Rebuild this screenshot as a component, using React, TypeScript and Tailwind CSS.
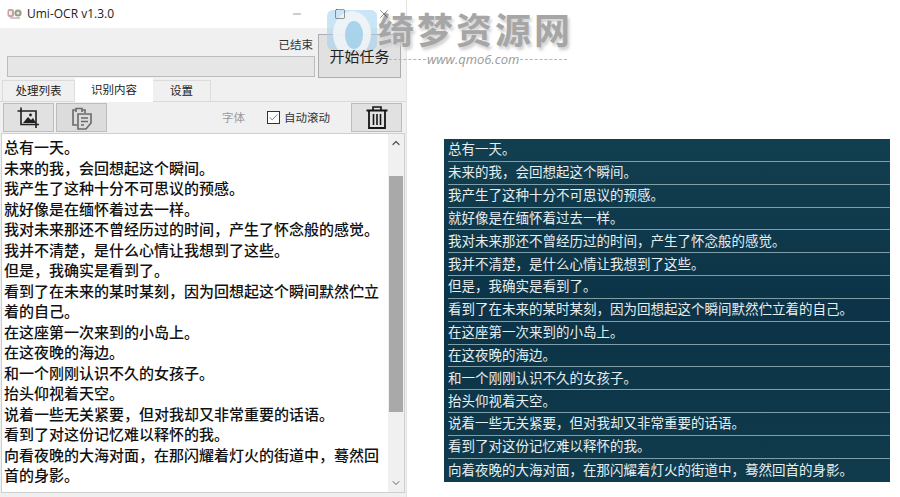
import React from 'react';
import { Minus, Square, X, ChevronUp, ChevronDown, Check } from 'lucide-react';

const cjk = "font-['Noto_Sans_CJK_SC','Noto_Sans',sans-serif]";

const LEFT_LINES = [
    '总有一天。',
    '未来的我，会回想起这个瞬间。',
    '我产生了这种十分不可思议的预感。',
    '就好像是在缅怀着过去一样。',
    '我对未来那还不曾经历过的时间，产生了怀念般的感觉。',
    '我并不清楚，是什么心情让我想到了这些。',
    '但是，我确实是看到了。',
    '看到了在未来的某时某刻，因为回想起这个瞬间默然伫立着的自己。',
    '在这座第一次来到的小岛上。',
    '在这夜晚的海边。',
    '和一个刚刚认识不久的女孩子。',
    '抬头仰视着天空。',
    '说着一些无关紧要，但对我却又非常重要的话语。',
    '看到了对这份记忆难以释怀的我。',
    '向看夜晚的大海对面，在那闪耀着灯火的街道中，蓦然回首的身影。',
];

const RIGHT_LINES = [
    ...LEFT_LINES.slice(0, 14),
    '向着夜晚的大海对面，在那闪耀着灯火的街道中，蓦然回首的身影。',
];

function AppIcon() {
    return (
        <svg width="16" height="14" viewBox="0 0 16 14" aria-hidden="true">
            <rect x="0.5" y="2" width="6.5" height="8" rx="2" fill="#c9a3a3" />
            <rect x="2" y="4" width="3" height="4" fill="#f3eeee" />
            <circle cx="11" cy="6" r="3.6" fill="#9a9a8c" />
            <circle cx="11" cy="6" r="1.6" fill="#e6e6e0" />
            <path d="M3 11h10" stroke="#b9b2b2" strokeWidth="1.4" />
        </svg>
    );
}

function ImageCropIcon() {
    return (
        <svg width="23" height="22" viewBox="0 0 23 22" fill="none" stroke="#202020" aria-hidden="true">
            <path d="M4 0.5V17.5H22" strokeWidth="1.6" />
            <path d="M0.5 4H19V21" strokeWidth="1.6" />
            <circle cx="13.5" cy="8" r="1.4" fill="#202020" stroke="none" />
            <path d="M6 16l5-6 3 3 2-2 3 5z" fill="#202020" stroke="none" />
        </svg>
    );
}

function ClipboardIcon() {
    return (
        <svg width="22" height="24" viewBox="0 0 22 24" fill="none" stroke="#6a6a6a" strokeWidth="1.6" aria-hidden="true">
            <path d="M5 4H2v15h4" />
            <path d="M5 6V2.5h6V6" />
            <path d="M11 4h3v3" />
            <path d="M7 8h13v9l-5 6H7z" />
            <path d="M10 12h7M10 15.5h7M10 19h3" />
        </svg>
    );
}

function BinIcon() {
    return (
        <svg width="22" height="23" viewBox="0 0 22 23" fill="none" stroke="#151515" aria-hidden="true">
            <path d="M0.5 4.5H21.5" strokeWidth="2" />
            <path d="M7 4V1h8v3" strokeWidth="1.6" />
            <path d="M3 5V22H19V5" strokeWidth="1.8" />
            <path d="M7.5 8V19M11 8V19M14.5 8V19" strokeWidth="1.6" />
        </svg>
    );
}

function OcrWindow() {
    return (
        <div className="flex h-[497px] w-[407px] shrink-0 flex-col border-r border-[#e4e4e4] bg-[#f0f0f0]">
            {/* Title bar */}
            <div className="flex h-[28px] shrink-0 items-center bg-white pl-[7px]">
                <AppIcon />
                <span className="ml-[4px] font-['Open_Sans',sans-serif] text-[12px] text-[#222]">
                    Umi-OCR v1.3.0
                </span>
                {/* window buttons stay above the site stamp */}
                <div className="relative z-10 ml-auto flex items-center gap-[31px] pr-[15px] text-[#333]">
                    <Minus size={12} strokeWidth={1} />
                    <Square size={12} strokeWidth={1} />
                    <X size={14} strokeWidth={1} />
                </div>
            </div>

            {/* Status and progress */}
            <div className="flex h-[50px] shrink-0 items-end pl-[7px] pr-[5px]">
                <div className="flex w-[308px] flex-col items-end">
                    <span className={`${cjk} mb-[4px] mr-[2px] text-[11.5px] leading-[16px] text-[#333]`}>已结束</span>
                    <div className="mb-[1px] h-[21px] w-full border border-[#bcbcbc] bg-[#e6e6e6]" />
                </div>
                <button className={`${cjk} ml-[3px] flex h-[44px] w-[83px] items-center justify-center border border-[#adadad] bg-[#e1e1e1] text-[15px] text-[#222]`}>
                    开始任务
                </button>
            </div>

            {/* Tabs */}
            <div className={`${cjk} mt-[1px] flex h-[23px] shrink-0 items-end border-b border-[#d9d9d9] pl-[2px] text-[11.5px] text-[#222]`}>
                <div className="flex h-[21px] w-[73px] items-center justify-center border border-b-0 border-[#dcdcdc] bg-[#f0f0f0]">处理列表</div>
                <div className="-mb-[1px] flex h-[24px] w-[78px] items-center justify-center bg-white">识别内容</div>
                <div className="flex h-[21px] w-[58px] items-center justify-center border border-b-0 border-l-0 border-[#dcdcdc] bg-[#f0f0f0]">设置</div>
            </div>

            {/* Toolbar */}
            <div className="flex h-[31px] shrink-0 items-center pl-[3px] pr-[4px]">
                <div className="flex h-[29px] w-[51px] items-center justify-center border border-[#bdbdbd] bg-[#e1e1e1]">
                    <ImageCropIcon />
                </div>
                <div className="ml-[2px] flex h-[29px] w-[51px] items-center justify-center border border-[#bdbdbd] bg-[#dcdcdc]">
                    <ClipboardIcon />
                </div>
                <span className={`${cjk} ml-[115px] text-[11.5px] text-[#9a9a9a]`}>字体</span>
                <span className="ml-[22px] flex h-[13px] w-[13px] items-center justify-center border border-[#333] bg-white">
                    <Check size={11} strokeWidth={1.4} className="text-[#333]" />
                </span>
                <span className={`${cjk} ml-[4px] text-[11.5px] text-[#333]`}>自动滚动</span>
                <div className="ml-auto flex h-[29px] w-[51px] items-center justify-center border border-[#bdbdbd] bg-[#e1e1e1]">
                    <BinIcon />
                </div>
            </div>

            {/* Recognised text with scrollbar */}
            <div className="mx-[1px] flex h-[360px] shrink-0 border border-[#cfcfcf] bg-white">
                <div className={`${cjk} flex-1 pl-[2px] pr-[9px] pt-[3px] text-[15px] leading-[20.5px] font-medium text-[#111]`}>
                    {LEFT_LINES.map(line => (
                        <div key={line}>{line}</div>
                    ))}
                </div>
                <div className="flex w-[16px] shrink-0 flex-col items-center bg-[#f0f0f0]">
                    <ChevronUp size={12} strokeWidth={2.5} className="mt-[3px] text-[#555]" />
                    <div className="mt-[27px] h-[236px] w-[14px] bg-[#a9a9a9]" />
                    <ChevronDown size={12} strokeWidth={2} className="mb-[3px] mt-auto text-[#666]" />
                </div>
            </div>
        </div>
    );
}

function OverlayPanel() {
    return (
        <div className={`${cjk} ml-[37px] mt-[139px] h-[343px] w-[446px] shrink-0 bg-gradient-to-b from-[#123f50] via-[#0c3347] to-[#0f3b4c] text-[13.5px] text-[#e6eef0]`}>
            {RIGHT_LINES.map((line, i) => (
                <div
                    key={line}
                    className={`ml-[4px] flex h-[22.85px] items-center pb-[3px] ${i < RIGHT_LINES.length - 1 ? 'border-b border-[#7f9ea8]' : ''}`}>
                    {line}
                </div>
            ))}
        </div>
    );
}

// Site stamp sitting across the top of the page
function SiteStamp() {
    return (
        <div className="pointer-events-none absolute left-[327px] top-[10px] h-[60px] w-[250px]">
            <svg className="absolute left-0 top-0" width="50" height="40" viewBox="0 0 50 40" aria-hidden="true">
                <rect x="0" y="0" width="50" height="40" rx="6" fill="#9fd0ee" opacity="0.55" />
                <ellipse cx="25" cy="24" rx="19" ry="23" fill="#f4f6f8" opacity="0.85" />
                <ellipse cx="27" cy="25" rx="9" ry="14" fill="#a9d3ea" />
            </svg>
            <span className={`${cjk} absolute left-[51px] top-[-2px] text-[36px] leading-[40px] font-bold tracking-[3px] whitespace-nowrap text-[#a6a6a6] [text-shadow:2px_3px_3px_#d0d0d0]`}>
                绮梦资源网
            </span>
            <div className="absolute left-[62px] top-[42px] flex w-[178px] items-center text-[#9a9a9a]">
                <span className="h-0 w-[37px] flex-none border-t border-dashed border-[#b5b5b5]" />
                <span className="mx-[1px] font-['Open_Sans',sans-serif] text-[13px] leading-[14px] italic">www.qmo6.com</span>
                <span className="h-0 flex-1 border-t border-dashed border-[#b5b5b5]" />
            </div>
        </div>
    );
}

export default function App() {
    return (
        <div className="relative flex h-[497px] w-[900px] overflow-hidden bg-white">
            <OcrWindow />
            <OverlayPanel />
            <SiteStamp />
        </div>
    );
}
